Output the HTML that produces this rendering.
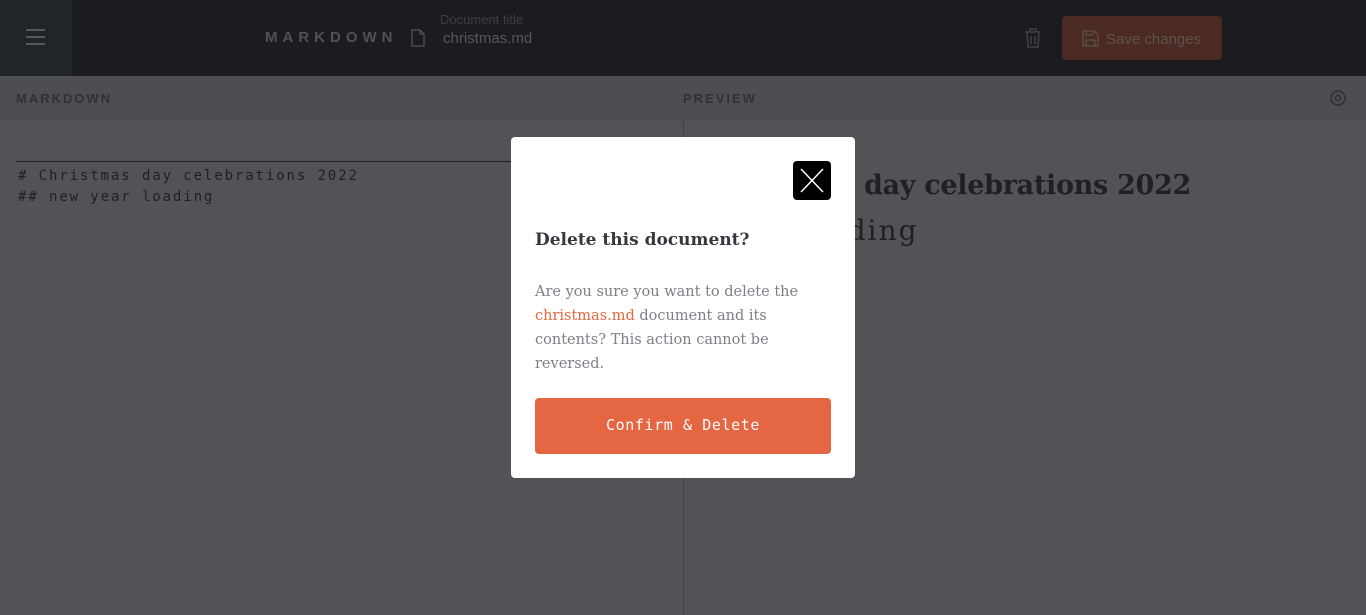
<!DOCTYPE html>
<html><head><style>
*{margin:0;padding:0;box-sizing:border-box}
body{width:1366px;height:615px;overflow:hidden;background:#525356;font-family:"Liberation Sans",sans-serif;position:relative}
.top{position:absolute;left:0;top:0;width:1366px;height:76px;background:#1b1c1f}
.menu{position:absolute;left:0;top:0;width:72px;height:76px;background:#212428}
.abs{position:absolute;white-space:nowrap}
.ph{position:absolute;top:76px;height:45px;background:#4d4e51;width:1366px}
.mono{font-family:"DejaVu Sans Mono","Liberation Mono",monospace}
.serif{font-family:"DejaVu Serif","Liberation Serif",serif}
</style></head><body>
<div class="top"></div>
<div class="menu"></div>
<div class="abs" style="left:26px;top:29px;width:19px;height:2px;background:#55585c"></div>
<div class="abs" style="left:26px;top:36px;width:19px;height:2px;background:#55585c"></div>
<div class="abs" style="left:26px;top:43px;width:19px;height:2px;background:#55585c"></div>
<div class="abs" style="left:265px;top:29px;font-size:15px;font-weight:bold;letter-spacing:5px;color:#505256">MARKDOWN</div>
<svg class="abs" style="left:410px;top:29px" width="16" height="18" viewBox="0 0 16 18"><path d="M2 1h8l4 4v12H2z M10 1v4h4" fill="none" stroke="#505256" stroke-width="1.3"/></svg>
<div class="abs" style="left:440px;top:12px;font-size:13px;color:#3d3f43">Document title</div>
<div class="abs" style="left:443px;top:30px;font-size:15px;color:#55575b">christmas.md</div>
<svg class="abs" style="left:1024px;top:28px" width="18" height="20" viewBox="0 0 18 20"><path d="M1 4h16M6 4V1h6v3M3 4l1 15h10l1-15M7 8v8M11 8v8" fill="none" stroke="#3f4145" stroke-width="1.5"/></svg>
<div class="abs" style="left:1062px;top:16px;width:160px;height:44px;background:#4a2a23;border-radius:4px"></div>
<svg class="abs" style="left:1082px;top:30px" width="17" height="17" viewBox="0 0 17 17"><path d="M1 1h11l4 4v11H1z M4 1v4h7V1 M4 16v-6h9v6" fill="none" stroke="#5a4a46" stroke-width="1.5"/></svg>
<div class="abs" style="left:1106px;top:31px;font-size:15px;color:#5e5250">Save changes</div>
<div class="ph"></div>
<div class="abs" style="left:16px;top:91px;font-size:13px;font-weight:bold;letter-spacing:2px;color:#2f3134">MARKDOWN</div>
<div class="abs" style="left:683px;top:91px;font-size:13px;font-weight:bold;letter-spacing:2px;color:#2f3134">PREVIEW</div>
<svg class="abs" style="left:1329px;top:89px" width="18" height="18" viewBox="0 0 18 18"><circle cx="9" cy="9" r="7" fill="none" stroke="#2f3134" stroke-width="1.5"/><circle cx="9" cy="9" r="2.5" fill="none" stroke="#2f3134" stroke-width="1.5"/></svg>
<div class="abs" style="left:683px;top:121px;width:1px;height:494px;background:#3f4043"></div>
<div class="abs" style="left:16px;top:161px;width:500px;height:1px;background:#1f2023"></div>
<div class="abs mono" style="left:18px;top:166px;font-size:14px;letter-spacing:1.9px;line-height:21px;color:#1f2023">
# Christmas day celebrations 2022<br>## new year loading</div>
<div class="abs serif" style="left:864px;top:170px;font-size:27px;font-weight:bold;color:#1f2023;letter-spacing:-0.3px">day celebrations 2022</div>
<div class="abs serif" style="left:829px;top:214px;font-size:28px;color:#1f2023;letter-spacing:2px">ading</div>
<div class="abs" style="left:511px;top:137px;width:344px;height:341px;background:#fff;border-radius:4px"></div>
<div class="abs" style="left:793px;top:161px;width:38px;height:39px;background:#000;border-radius:4px"></div>
<svg class="abs" style="left:793px;top:161px" width="38" height="39"><path d="M8 8L30 31M30 8L8 31" stroke="#fff" stroke-width="1.5"/></svg>
<div class="abs serif" style="left:535px;top:230px;font-size:17px;font-weight:bold;color:#35393f">Delete this document?</div>
<div class="abs serif" style="left:535px;top:280px;font-size:14.5px;line-height:24px;color:#7c8187;white-space:normal;width:300px">Are you sure you want to delete the<br><span style="color:#e46643">christmas.md</span> document and its<br>contents? This action cannot be<br>reversed.</div>
<div class="abs" style="left:535px;top:398px;width:296px;height:56px;background:#e46643;border-radius:4px"></div>
<div class="abs mono" style="left:535px;top:416px;width:296px;text-align:center;font-size:15px;letter-spacing:0.6px;color:#fff">Confirm &amp; Delete</div>
</body></html>
